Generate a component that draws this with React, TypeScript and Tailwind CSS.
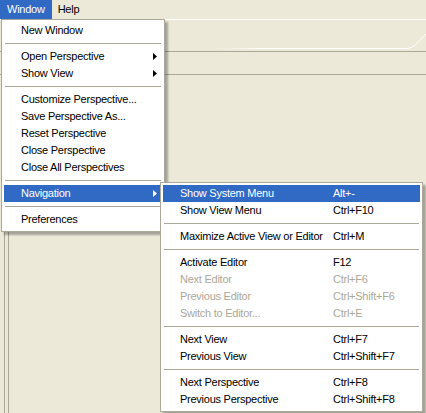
import React from 'react';

type Entry =
  | { sep: true }
  | {
      sep?: false;
      label: string;
      shortcut?: string;
      sub?: boolean;
      active?: boolean;
      disabled?: boolean;
    };

const windowMenu: Entry[] = [
  { label: 'New Window' },
  { sep: true },
  { label: 'Open Perspective', sub: true },
  { label: 'Show View', sub: true },
  { sep: true },
  { label: 'Customize Perspective...' },
  { label: 'Save Perspective As...' },
  { label: 'Reset Perspective' },
  { label: 'Close Perspective' },
  { label: 'Close All Perspectives' },
  { sep: true },
  { label: 'Navigation', sub: true, active: true },
  { sep: true },
  { label: 'Preferences' },
];

const navigationMenu: Entry[] = [
  { label: 'Show System Menu', shortcut: 'Alt+-', active: true },
  { label: 'Show View Menu', shortcut: 'Ctrl+F10' },
  { sep: true },
  { label: 'Maximize Active View or Editor', shortcut: 'Ctrl+M' },
  { sep: true },
  { label: 'Activate Editor', shortcut: 'F12' },
  { label: 'Next Editor', shortcut: 'Ctrl+F6', disabled: true },
  { label: 'Previous Editor', shortcut: 'Ctrl+Shift+F6', disabled: true },
  { label: 'Switch to Editor...', shortcut: 'Ctrl+E', disabled: true },
  { sep: true },
  { label: 'Next View', shortcut: 'Ctrl+F7' },
  { label: 'Previous View', shortcut: 'Ctrl+Shift+F7' },
  { sep: true },
  { label: 'Next Perspective', shortcut: 'Ctrl+F8' },
  { label: 'Previous Perspective', shortcut: 'Ctrl+Shift+F8' },
];

const Arrow: React.FC<{ white?: boolean }> = ({ white }) => (
  <svg width="4" height="7" viewBox="0 0 4 7" className="shrink-0">
    <path d="M0 0 L4 3.5 L0 7 Z" fill={white ? '#ffffff' : '#000000'} />
  </svg>
);

const Menu: React.FC<{ items: Entry[]; withShortcuts?: boolean; className: string }> = ({
  items,
  withShortcuts,
  className,
}) => (
  <div
    className={`absolute bg-white border border-[#aca899] px-[2px] pt-[2px] pb-[3px] shadow-[3px_3px_2px_rgba(0,0,0,0.3)] ${className}`}
  >
    {items.map((it, i) =>
      it.sep ? (
        <div key={i} className="h-[9px] flex items-center px-px">
          <div className="h-px w-full bg-[#aca899]" />
        </div>
      ) : (
        <div
          key={i}
          className={`h-[17px] flex items-center pl-[17px] pr-[5px] ${
            it.active ? 'bg-[#316ac5] text-white' : it.disabled ? 'text-[#aca899]' : 'text-black'
          }`}
        >
          <span className={withShortcuts ? 'w-[153px] shrink-0 whitespace-nowrap' : 'flex-1 whitespace-nowrap'}>
            {it.label}
          </span>
          {withShortcuts && <span className="whitespace-nowrap">{it.shortcut}</span>}
          {it.sub && <Arrow white={it.active} />}
        </div>
      )
    )}
  </div>
);

export default function App() {
  return (
    <div className="relative w-[426px] h-[413px] overflow-hidden bg-[#ece9d8] font-['Liberation_Sans',Arial,sans-serif] text-[11px] tracking-[-0.25px] leading-none">
      {/* menu bar */}
      <div className="flex h-[19px] items-center">
        <div className="h-full flex items-center px-[7px] bg-[#316ac5] text-white">Window</div>
        <div className="h-full flex items-center px-[6px] text-black">Help</div>
      </div>

      {/* workbench behind the menus */}
      <div className="flex flex-col h-[394px] border-t border-white">
        <div className="relative h-[32px] border-b border-[#aca899]">
          <svg className="absolute left-0 top-0" width="426" height="31" viewBox="0 0 426 31">
            <defs>
              <linearGradient id="tabfade" x1="0" x2="1" y1="0" y2="0">
                <stop offset="0.5" stopColor="#ffffff" stopOpacity="0" />
                <stop offset="0.62" stopColor="#ffffff" stopOpacity="1" />
              </linearGradient>
            </defs>
            <path d="M0 28.5 L406 28.5 C414 28.5 418 22 426 14" stroke="url(#tabfade)" strokeWidth="1" fill="none" />
          </svg>
        </div>
        <div className="h-[23px] border-b border-[#aca899]" />
        <div className="flex-1 flex">
          <div className="ml-[4px] border-l border-[#aca899] pl-[3px]">
            <div className="h-full border-l border-[#aca899]" />
          </div>
        </div>
      </div>

      <Menu items={windowMenu} className="left-[1px] top-[19px] w-[164px]" />
      <Menu items={navigationMenu} withShortcuts className="left-[160px] top-[182px] w-[263px]" />
    </div>
  );
}
